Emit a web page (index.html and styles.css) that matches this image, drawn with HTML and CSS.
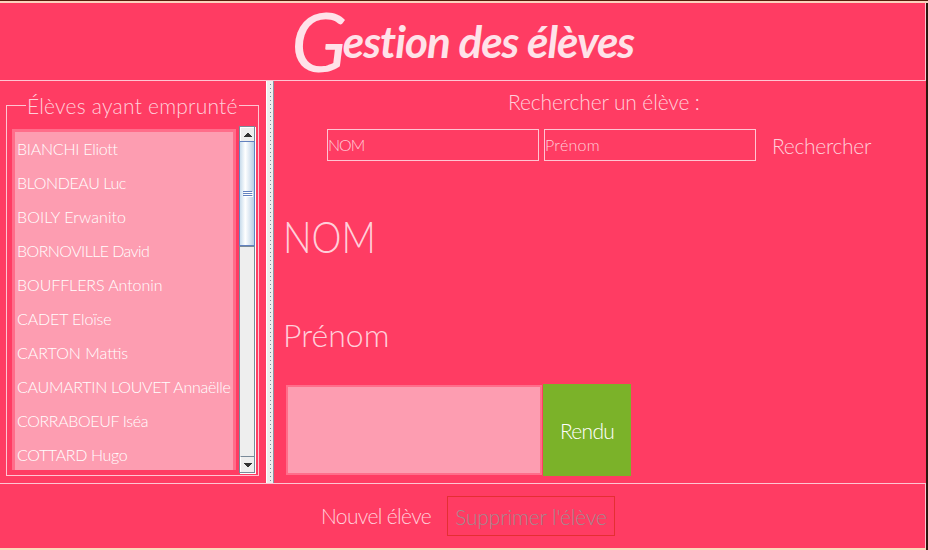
FILE: index.html
```html
<!DOCTYPE html>
<html lang="fr">
<head>
<meta charset="utf-8">
<title>Gestion des élèves</title>
<link rel="stylesheet" href="styles.css">
</head>
<body>
<div class="window">
  <header class="header"><h1 class="title"><span class="initial">G</span><span>estion des élèves</span></h1></header>
  <main class="split">
    <section class="sidebar">
      <div class="group">
        <h2 class="legend">Élèves ayant emprunté</h2>
        <ul class="list">
          <li class="t1">BIANCHI Eliott</li>
          <li class="t2">BLONDEAU Luc</li>
          <li class="t3">BOILY Erwanito</li>
          <li class="t4">BORNOVILLE David</li>
          <li class="t5">BOUFFLERS Antonin</li>
          <li class="t6">CADET Eloïse</li>
          <li class="t7">CARTON Mattis</li>
          <li class="t8">CAUMARTIN LOUVET Annaëlle</li>
          <li class="t9">CORRABOEUF Iséa</li>
          <li class="t10">COTTARD Hugo</li>
        </ul>
        <div class="scrollbar">
          <div class="arrow"><svg width="8" height="4" viewBox="0 0 8 4" shape-rendering="crispEdges"><path d="M3 0h2v1h1v1h1v1h1v1H0V3h1V2h1V1h1z" fill="#333"/></svg></div>
          <div class="thumb"><i></i><i></i><i></i></div>
          <div class="track"></div>
          <div class="arrow down"><svg width="8" height="4" viewBox="0 0 8 4" shape-rendering="crispEdges"><path d="M0 0h8v1H7v1H6v1H5v1H3V3H2V2H1V1H0z" fill="#333"/></svg></div>
        </div>
      </div>
    </section>
    <div class="divider"></div>
    <section class="detail">
      <p class="search-title"><span>Rechercher un élève :</span></p>
      <form class="search">
        <div class="field nom"><span>NOM</span></div>
        <div class="field prenom"><span>Prénom</span></div>
        <div class="search-button"><span>Rechercher</span></div>
      </form>
      <div class="last-name"><span>NOM</span></div>
      <div class="first-name"><span>Prénom</span></div>
      <div class="loan">
        <div class="books"></div>
        <div class="returned"><span>Rendu</span></div>
      </div>
    </section>
  </main>
  <footer class="footer">
    <div class="new"><span>Nouvel élève</span></div>
    <div class="delete"><span>Supprimer l'élève</span></div>
  </footer>
</div>
</body>
</html>
```
FILE: styles.css
```css
* { box-sizing: border-box; margin: 0; padding: 0; }
body {
  width: 928px; height: 550px; overflow: hidden;
  background: #2d160c;
  font-family: Lato, "Open Sans", sans-serif; font-weight: 300;
  color: #ffcfda;
}
.window {
  width: 926px; height: 550px;
  display: flex; flex-direction: column;
  background: #ff3c63;
  border-bottom: 2px solid #fbd9bc;
}
.window::before { content: ""; width: 928px; height: 3px; flex: none; background: linear-gradient(#561c0b 1px, #fbd3bd 1px); }
.header { height: 78px; border: solid #ffc5d2; border-width: 0 1px 1px 0; display: flex; padding-left: 291px; }
.title {
  display: flex; height: 76px;
  font-size: 44px; font-style: italic; font-weight: 700; line-height: 76px;
  color: #ffe2e9; white-space: nowrap; letter-spacing: -1px;
}
.initial { font-size: 82px; font-weight: 400; margin-top: -1px; letter-spacing: -4px; }
.split { height: 402px; display: flex; }
.sidebar { width: 266px; padding: 24px 7px 7px 6px; }
.group {
  height: 371px; border: 1px solid #ffc5d2; padding: 0 2px 2px 5px;
  display: grid; grid-template: 20px 348px / 224px 17px; column-gap: 3px;
}
.legend {
  grid-column: 1 / 3; justify-self: start; width: 213px; height: 28px;
  margin: -14px 0 0 14px; padding-left: 1px; background: #ff3c63;
  font-size: 21px; font-weight: 300; line-height: 27px; white-space: nowrap; letter-spacing: .22px;
}
.list {
  height: 341px; margin-top: 3px; list-style: none; overflow: hidden;
  background: #fd9db1; border: solid #ff6d8a; border-width: 3px 3px 0; padding-left: 2px;
  color: #fff; font-size: 16px; white-space: nowrap;
}
.list li { height: 34px; line-height: 33px; }
.list .t1 { letter-spacing: -.25px; }
.list .t2 { letter-spacing: -.4px; }
.list .t3 { letter-spacing: .07px; }
.list .t4 { letter-spacing: -.57px; }
.list .t5 { letter-spacing: -.07px; }
.list .t6 { letter-spacing: -.15px; }
.list .t8 { letter-spacing: -.27px; }
.list .t9 { letter-spacing: -.38px; }
.list .t10 { letter-spacing: -.35px; }
.scrollbar { display: flex; flex-direction: column; background: #eee; border: 1px solid #7a8a99; box-shadow: 1px 1px #fff; width: 16px; height: 347px; }
.arrow { height: 14px; display: flex; align-items: center; justify-content: center; border: solid #fff; border-width: 1px 0 0 1px; }
.thumb {
  height: 105px; margin: 0 -1px; border: 1px solid #6382bf;
  background: linear-gradient(90deg, #c8dcec, #fff 38%, #b8cfe5);
  display: flex; flex-direction: column; align-items: center; justify-content: center; gap: 1px;
}
.thumb i { width: 9px; height: 1px; background: #6382bf; box-shadow: 1px 1px #fff; }
.track { flex: 1; border-top: 1px solid #7a8a99; }
.down { border-top: 1px solid #7a8a99; height: 16px; }
.divider {
  width: 8px; padding: 3px 0 0 3px; background: #eee;
  border-right: 1px solid #8796a4; border-left: 1px solid #fff;
}
.divider::after {
  content: ""; display: block; width: 1px; height: 100%;
  background: repeating-linear-gradient(#7a8a99 0 1px, #eee 1px 4px);
}
.detail { width: 652px; }
.search-title { height: 48px; padding-left: 234px; font-size: 21px; line-height: 41px; letter-spacing: -.13px; }
.search { display: flex; padding-left: 53px; height: 32px; }
.field { width: 212px; border: 1px solid #ffc5d2; font-size: 16px; line-height: 30px; }
.nom { letter-spacing: -1px; }
.prenom { margin-left: 5px; letter-spacing: .3px; }
.search-button { padding-left: 16px; font-size: 21px; line-height: 33px; letter-spacing: -.3px; }
.last-name { height: 107px; padding-left: 9px; font-size: 44px; line-height: 151px; }
.last-name span { display: inline-block; transform: scaleX(.86); transform-origin: 0 50%; }
.first-name { height: 116px; padding-left: 9px; font-size: 32px; line-height: 133px; }
.loan { display: flex; padding-left: 12px; }
.books { width: 256px; height: 90px; margin-top: 1px; border: 2px solid #ff6d8a; background: #fd9db1; }
.returned { width: 88px; height: 92px; margin-left: 1px; background: #7bb229; color: #fff; font-size: 21px; line-height: 93px; text-align: center; letter-spacing: -.7px; }
.footer { height: 65px; border: solid #ffc5d2; border-width: 1px 1px 0 0; display: flex; padding: 12px 0 0 321px; font-size: 21px; line-height: 40px; }
.new { width: 126px; letter-spacing: -.65px; }
.delete { width: 168px; height: 40px; border: 1px solid #e52f32; color: #a4888f; text-align: center; line-height: 39px; white-space: nowrap; letter-spacing: -.15px; }
```
